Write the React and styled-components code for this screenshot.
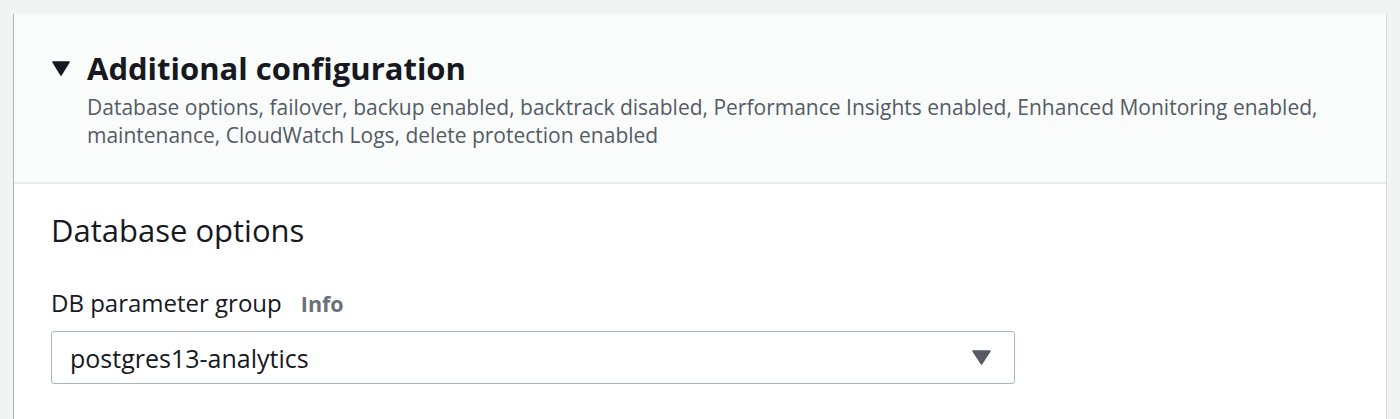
import React from "react";
import styled, { createGlobalStyle } from "styled-components";

const Global = createGlobalStyle`
  html, body { margin: 0; padding: 0; background: #f2f3f3; }
  body { font-family: "Open Sans", "Noto Sans", Arial, sans-serif; color: #16191f; }
`;

const Page = styled.div`
  padding: 14px 13px 0 13px;
  height: 419px;
  box-sizing: border-box;
  overflow: hidden;
`;

const Card = styled.section`
  background: #ffffff;
  border-left: 1px solid #aab7b8;
  border-right: 1px solid #d5dbdb;
  height: 420px;
`;

const Header = styled.div`
  background: #fafbfb;
  border-bottom: 2px solid #eaeded;
  height: 170px;
  box-sizing: border-box;
  padding: 36px 40px 0 38px;
  display: grid;
  grid-template-columns: 35px 1fr;
`;

const Caret = styled.svg`
  width: 18px;
  height: 15px;
  margin-top: 11px;
`;

const Title = styled.h2`
  margin: 0;
  font-size: 31px;
  line-height: 36px;
  font-weight: 700;
  color: #16191f;
`;

const Desc = styled.p`
  margin: 8px 0 0;
  font-size: 21px;
  line-height: 27.5px;
  color: #545b64;
`;

const Body = styled.div`
  padding: 28px 37px 0 37px;
`;

const SectionTitle = styled.h3`
  margin: 0;
  font-size: 31px;
  line-height: 36px;
  font-weight: 400;
  color: #16191f;
`;

const Label = styled.div`
  margin-top: 41px;
  font-size: 24px;
  line-height: 28px;
  display: flex;
  align-items: baseline;
  gap: 19px;
`;

const Info = styled.span`
  font-weight: 700;
  font-size: 21.5px;
  color: #687078;
`;

const Select = styled.div`
  margin-top: 13px;
  width: 964px;
  height: 53px;
  box-sizing: border-box;
  border: 1px solid #aab7b8;
  border-radius: 3px;
  display: flex;
  align-items: center;
  justify-content: space-between;
  padding: 0 23px 0 18px;
  font-size: 25px;
  color: #16191f;
  background: #fff;
`;

const Arrow = styled.svg`
  width: 19px;
  height: 15px;
`;

export default function App() {
  return (
    <>
      <Global />
      <Page>
        <Card>
          <Header>
            <Caret viewBox="0 0 18 15">
              <path d="M1 1 H17 L9 14 Z" fill="#16191f" stroke="#16191f" strokeWidth="1.5" strokeLinejoin="round" />
            </Caret>
            <div>
              <Title>Additional configuration</Title>
              <Desc>
                Database options, failover, backup enabled, backtrack disabled, Performance Insights enabled, Enhanced Monitoring enabled, maintenance, CloudWatch Logs, delete protection enabled
              </Desc>
            </div>
          </Header>
          <Body>
            <SectionTitle>Database options</SectionTitle>
            <Label>
              DB parameter group <Info>Info</Info>
            </Label>
            <Select>
              <span>postgres13-analytics</span>
              <Arrow viewBox="0 0 19 15">
                <path d="M1 1 H18 L9.5 14 Z" fill="#545b64" stroke="#545b64" strokeWidth="1.5" strokeLinejoin="round" />
              </Arrow>
            </Select>
          </Body>
        </Card>
      </Page>
    </>
  );
}
